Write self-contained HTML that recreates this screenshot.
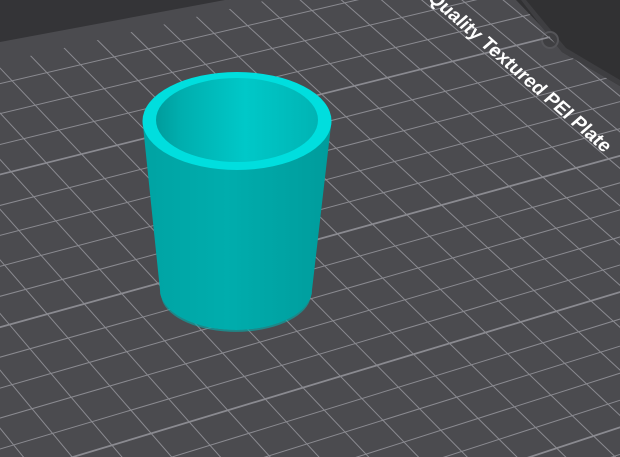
<!DOCTYPE html>
<html><head><style>
html,body{margin:0;padding:0;background:#4b4b4f;width:620px;height:457px;overflow:hidden;}
svg{display:block}
</style></head><body>
<svg width="620" height="457" viewBox="0 0 620 457" xmlns="http://www.w3.org/2000/svg">
<defs>
<clipPath id="bed"><polygon points="0,63 268,0 516,0 541,26 562,52 620,86 620,457 0,457"/></clipPath>
<linearGradient id="body" x1="0" x2="1" y1="0" y2="0">
<stop offset="0" stop-color="#00a3a3"/><stop offset="0.45" stop-color="#00adad"/><stop offset="0.6" stop-color="#00a8a8"/><stop offset="1" stop-color="#009c9c"/>
</linearGradient>
<linearGradient id="inner" x1="0" x2="1" y1="0" y2="0">
<stop offset="0" stop-color="#009c9c"/><stop offset="0.15" stop-color="#00aeae"/><stop offset="0.55" stop-color="#00c8c8"/><stop offset="1" stop-color="#00b4b4"/>
</linearGradient>
</defs>
<rect width="620" height="457" fill="#4b4b4f"/>
<polygon points="0,0 225,0 0,42" fill="#343437"/>
<polygon points="516,0 620,0 620,86 562,52 541,26" fill="#313133"/>
<polygon points="521,0 541,26 562,52 620,86 620,80 566,48 545,23 526,0" fill="#3e3e41"/>
<circle cx="550" cy="40" r="8" fill="#3f3f42" stroke="#555559" stroke-width="2"/>
<g clip-path="url(#bed)" stroke="#8a8a90" fill="none">
<path stroke-width="1" d="M-396,-10L-16,470M-356,-10L34,470M-316,-10L83,470M-275,-10L133,470M-235,-10L183,470M-195,-10L232,470M-154,-10L282,470M-114,-10L331,470M-74,-10L381,470M-33,-10L431,470M7,-10L480,470M47,-10L530,470M88,-10L579,470M128,-10L629,470M168,-10L678,470M209,-10L728,470M249,-10L777,470M289,-10L827,470M330,-10L876,470M370,-10L926,470M410,-10L975,470M450,-10L1025,470M491,-10L1074,470M531,-10L1124,470M571,-10L1173,470M611,-10L1223,470"/>
<path stroke-width="1" d="M-10,55L630,-91M-10,86L630,-64M-10,116L630,-37M-10,147L630,-10M-10,208L630,44M-10,238L630,72M-10,269L630,99M-10,299L630,126M-10,360L630,180M-10,391L630,207M-10,421L630,234M-10,452L630,262M-10,513L630,316M-10,543L630,343M-10,574L630,370M-10,604L630,397M-10,665L630,451M-10,696L630,478"/>
<path stroke-width="1.8" d="M-10,24L630,-119M-10,177L630,17M-10,330L630,153M-10,482L630,289M-10,635L630,424"/>
</g>
<text x="0" y="0" font-family="Liberation Sans, sans-serif" font-weight="bold" font-size="19" fill="#fff" text-anchor="end" transform="translate(604,153) rotate(41) skewX(-8)">Quality Textured PEI Plate</text>
<path d="M142.5,121 L160,290 A76,40 0 0 0 312,290 L331.5,121 Z" fill="url(#body)"/>
<path d="M160,290 L162,300 A75,38 0 0 0 310,300 L312,290 A76,40 0 0 1 160,290 Z" fill="#00b0b0" opacity="0.6"/>
<ellipse cx="237" cy="121" rx="94.5" ry="49" fill="#00dede"/>
<ellipse cx="237" cy="120" rx="81" ry="42" fill="url(#inner)"/>
</svg>
</body></html>
